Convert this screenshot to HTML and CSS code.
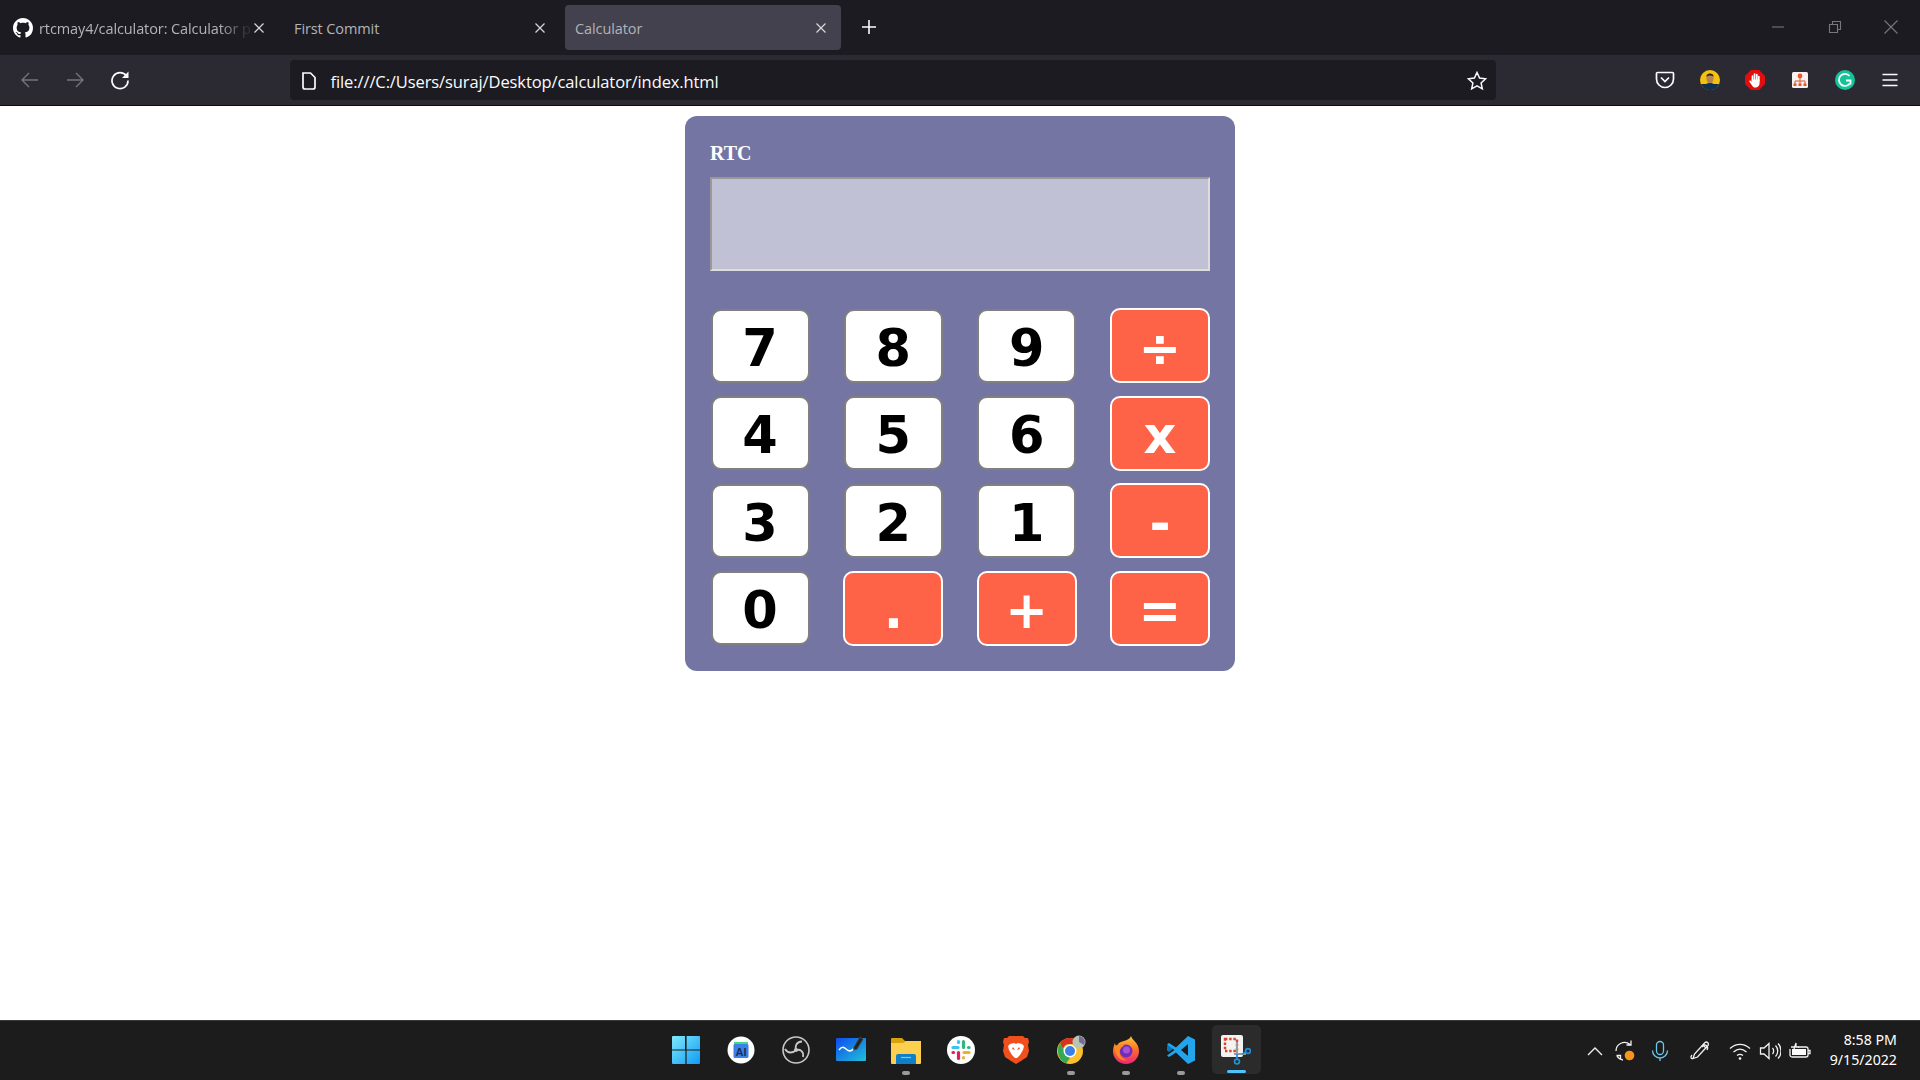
FILE: index.html
```html
<!DOCTYPE html>
<html lang="en">
<head>
<meta charset="utf-8">
<title>Calculator</title>
<link rel="stylesheet" href="styles.css">
</head>
<body>
<header class="chrome">
  <div class="tabbar">
    <div class="tabs">
      <div class="tab">
        <svg class="favicon" viewBox="0 0 16 16"><path fill="#fff" d="M8 0C3.58 0 0 3.58 0 8c0 3.54 2.29 6.53 5.47 7.59.4.07.55-.17.55-.38 0-.19-.01-.82-.01-1.49-2.01.37-2.53-.49-2.69-.94-.09-.23-.48-.94-.82-1.13-.28-.15-.68-.52-.01-.53.63-.01 1.08.58 1.23.82.72 1.21 1.87.87 2.33.66.07-.52.28-.87.51-1.07-1.78-.2-3.64-.89-3.64-3.95 0-.87.31-1.59.82-2.15-.08-.2-.36-1.02.08-2.12 0 0 .67-.21 2.2.82.64-.18 1.32-.27 2-.27.68 0 1.36.09 2 .27 1.53-1.04 2.2-.82 2.2-.82.44 1.1.16 1.92.08 2.12.51.56.82 1.27.82 2.15 0 3.07-1.87 3.75-3.65 3.95.29.25.54.73.54 1.48 0 1.07-.01 1.93-.01 2.2 0 .21.15.46.55.38A8.013 8.013 0 0016 8c0-4.42-3.58-8-8-8z"/></svg>
        <span class="tab-label tab-label-fade">rtcmay4/calculator: Calculator p</span>
        <svg class="tab-close" viewBox="0 0 12 12"><path d="M1.5 1.5l9 9M10.5 1.5l-9 9"/></svg>
      </div>
      <div class="tab">
        <span class="tab-label">First Commit</span>
        <svg class="tab-close" viewBox="0 0 12 12"><path d="M1.5 1.5l9 9M10.5 1.5l-9 9"/></svg>
      </div>
      <div class="tab tab-active">
        <span class="tab-label">Calculator</span>
        <svg class="tab-close" viewBox="0 0 12 12"><path d="M1.5 1.5l9 9M10.5 1.5l-9 9"/></svg>
      </div>
      <svg class="new-tab" viewBox="0 0 16 16"><path d="M8 1v14M1 8h14"/></svg>
    </div>
    <div class="window-controls">
      <svg class="win-icon" viewBox="0 0 14 14"><path d="M1 7h12"/></svg>
      <svg class="win-icon" viewBox="0 0 14 14"><path d="M1.5 4.5h8v8h-8zM4.5 4.5v-3h8v8h-3"/></svg>
      <svg class="win-icon" viewBox="0 0 14 14"><path d="M.5.5l13 13M13.500.5l-13 13"/></svg>
    </div>
  </div>
  <div class="toolbar">
    <div class="nav">
      <span class="tool"><svg class="ico ico-dim" viewBox="0 0 20 20"><path d="M18 10H2M9 3l-7 7 7 7"/></svg></span>
      <span class="tool"><svg class="ico ico-dim" viewBox="0 0 20 20"><path d="M2 10h16M11 3l7 7-7 7"/></svg></span>
      <span class="tool"><svg class="ico" viewBox="0 0 20 20"><path d="M16.500 6A8 8 0 1 0 18 10.500"/><path class="solid" d="M18.500 1.500v6.500h-6.500z"/></svg></span>
    </div>
    <div class="urlbar">
      <svg class="file-ico" viewBox="0 0 16 18"><path d="M2 1h7.500L14 5.500V15a2 2 0 0 1-2 2H4a2 2 0 0 1-2-2z"/></svg>
      <span class="url">file:///C:/Users/suraj/Desktop/calculator/index.html</span>
      <svg class="star" viewBox="0 0 20 20"><path d="M10 1.500l2.600 5.600 6 .7-4.500 4.100 1.200 6L10 14.900l-5.300 3 1.200-6L1.400 7.800l6-.7z"/></svg>
    </div>
    <div class="extensions">
      <span class="tool"><svg class="ico" viewBox="0 0 20 20"><path d="M2.500 2.500h15a1 1 0 0 1 1 1V9a8.500 8.500 0 0 1-17 0V3.500a1 1 0 0 1 1-1z"/><path d="M6 7.500l4 4 4-4"/></svg></span>
      <span class="tool"><svg class="ext" viewBox="0 0 20 20"><defs><clipPath id="av"><circle cx="10" cy="10" r="10"/></clipPath></defs><g clip-path="url(#av)"><rect width="20" height="20" fill="#f4c20d"/><path fill="#10304f" d="M0 14h20v6H0z"/><path fill="#10304f" d="M3 20c0-5 3-7 7-7s7 2 7 7z"/><ellipse cx="10" cy="8.500" rx="3.600" ry="4.800" fill="#b5835a"/><path fill="#2a1d14" d="M6.300 7c-.4-4 7-5 7.400 0-1-2-6.400-2-7.400 0z"/></g></svg></span>
      <span class="tool"><svg class="ext" viewBox="0 0 20 20"><path fill="#e30d0d" d="M6 0h8l6 6v8l-6 6H6l-6-6V6z"/><g fill="none" stroke="#fff" stroke-width="1.700" stroke-linecap="round"><path d="M7.500 11V6M9.600 10V4.200M11.800 10V4.600M13.800 10.500V6.500"/></g><path fill="#fff" d="M6.700 9.500h7.900V13c0 2.800-1.800 4.500-4 4.500-2 0-3-1-3.900-2.600L4.400 11.800c-.5-.9.700-1.700 1.400-.9l.9 1z"/></svg></span>
      <span class="tool"><svg class="ext" viewBox="0 0 20 20"><rect x="2" y="2" width="16" height="16" rx="1.500" fill="#f5f2f0"/><path fill="none" stroke="#e8552e" d="M10 8v3M5 14v-3h10v3M10 11v3"/><circle cx="10" cy="6" r="2.400" fill="#e8552e"/><rect x="3.500" y="13.500" width="3" height="2.500" fill="#e8552e"/><rect x="8.500" y="13.500" width="3" height="2.500" fill="#e8552e"/><rect x="13.500" y="13.500" width="3" height="2.500" fill="#e8552e"/></svg></span>
      <span class="tool"><svg class="ext" viewBox="0 0 20 20"><circle cx="10" cy="10" r="10" fill="#15c39a"/><path fill="none" stroke="#fff" stroke-width="1.800" d="M14.800 13.500A6 6 0 1 1 14.500 6"/><path fill="none" stroke="#fff" stroke-width="1.800" d="M11 10.500h4.500v4"/></svg></span>
      <span class="tool"><svg class="ico ico-menu" viewBox="0 0 16 16"><path d="M.5 2.500h15M.5 8h15M.5 13.500h15"/></svg></span>
    </div>
  </div>
</header>

<main class="page">
  <section class="calculator">
    <h1 class="brand">RTC</h1>
    <input class="display" type="text" aria-label="Display">
    <div class="keys">
      <button class="key">7</button>
      <button class="key">8</button>
      <button class="key">9</button>
      <button class="key key-op">÷</button>
      <button class="key">4</button>
      <button class="key">5</button>
      <button class="key">6</button>
      <button class="key key-op">x</button>
      <button class="key">3</button>
      <button class="key">2</button>
      <button class="key">1</button>
      <button class="key key-op">-</button>
      <button class="key">0</button>
      <button class="key key-op">.</button>
      <button class="key key-op">+</button>
      <button class="key key-op">=</button>
    </div>
  </section>
</main>

<footer class="taskbar">
  <div class="task-spacer"></div>
  <div class="task-apps">
    <span class="app"><svg class="app-ico" viewBox="0 0 30 30"><defs><linearGradient id="win" x1="0" y1="0" x2="1" y2="1"><stop offset="0" stop-color="#7fe9fb"/><stop offset="1" stop-color="#0f9bf5"/></linearGradient></defs><path fill="url(#win)" d="M1 2a1 1 0 0 1 1-1h12v13.400H1zM15.600 1H28a1 1 0 0 1 1 1v12.400H15.600zM1 15.600h13.400V29H2a1 1 0 0 1-1-1zM15.600 15.600H29V28a1 1 0 0 1-1 1H15.600z"/></svg></span>
    <span class="app"><svg class="app-ico" viewBox="0 0 30 30"><circle cx="15" cy="15" r="13.500" fill="#fff"/><path fill="#3ddc84" d="M8 7h14v4H8z"/><rect x="7.500" y="9" width="15" height="14" rx="1.500" fill="#3f7fe8"/><text class="ai-text" x="15" y="21">AI</text></svg></span>
    <span class="app"><svg class="app-ico" viewBox="0 0 30 30"><circle cx="15" cy="15" r="13" fill="#1e1e1e" stroke="#c8c8c8" stroke-width="1.600"/><path fill="none" stroke="#c8c8c8" stroke-width="1.800" d="M15 15c-1-4 0-8 6-8.500M15 15c4-1 8 1 7 7M15 15c-3 3-8 4-11-1"/><circle cx="15" cy="15" r="2" fill="#c8c8c8"/></svg></span>
    <span class="app"><svg class="app-ico" viewBox="0 0 30 30"><defs><linearGradient id="wb" x1="0" y1="0" x2="1" y2="1"><stop offset="0" stop-color="#0d4cf0"/><stop offset="1" stop-color="#20c2d8"/></linearGradient></defs><rect x="0" y="3" width="30" height="23" rx="1" fill="url(#wb)"/><path fill="none" stroke="#fff" stroke-width="1.600" d="M3 15c3-4 5-3 7-1s5 3 7 0"/><path fill="#222" stroke="#444" stroke-width="1" d="M18 12l6-10 3 2-6 10-3 1z"/></svg></span>
    <span class="app app-running"><svg class="app-ico" viewBox="0 0 30 30"><path fill="#d9a20b" d="M0 4a1 1 0 0 1 1-1h10l3 3h16v5H0z"/><path fill="#fdcf4e" d="M0 8h12l3-2h15v22a1 1 0 0 1-1 1H1a1 1 0 0 1-1-1z"/><path fill="#0f7fc9" d="M5 21a2 2 0 0 1 2-2h16a2 2 0 0 1 2 2v8H5z"/><path stroke="#7fc8f0" stroke-width="1.200" d="M10 22.500h10"/></svg></span>
    <span class="app"><svg class="app-ico" viewBox="0 0 30 30"><circle cx="15" cy="15" r="14" fill="#fff"/><g stroke-width="3.200" stroke-linecap="round" fill="none"><path stroke="#36c5f0" d="M7 12.500h5"/><path stroke="#36c5f0" d="M12.500 6.500v1"/><path stroke="#2eb67d" d="M17.500 6.500v6"/><path stroke="#2eb67d" d="M23 12.500h-.5"/><path stroke="#ecb22e" d="M18 17.500h5"/><path stroke="#ecb22e" d="M17.500 23v-.5"/><path stroke="#e01e5a" d="M12.500 17.500v6"/><path stroke="#e01e5a" d="M7 17.500h.5"/></g></svg></span>
    <span class="app"><svg class="app-ico" viewBox="0 0 30 30"><path fill="#f1501e" d="M8 1h14l2 2 3 0 1 4-1 3 1 6-2 6-6 4-5 3-5-3-6-4-2-6 1-6-1-3 1-4 3 0z"/><path fill="#fff" d="M9 9l4-1 2 1 2-1 4 1 2 2-1 4-3 5-3 3h-2l-3-3-3-5-1-4zM12 12l-1 2 3 1zM18 12l-2 3 3-1z"/></svg></span>
    <span class="app app-running"><svg class="app-ico" viewBox="0 0 30 30"><circle cx="14" cy="16" r="13" fill="#fbc02d"/><path fill="#d93025" d="M14 3a13 13 0 0 1 11 6H14a7 7 0 0 0-7 5L4 8a13 13 0 0 1 10-5z"/><path fill="#34a853" d="M2 16a13 13 0 0 1 2-8l6 11 4 4-4 5.500A13 13 0 0 1 2 16z"/><circle cx="14" cy="16" r="6.500" fill="#fff"/><circle cx="14" cy="16" r="5" fill="#3b7fe8"/><circle cx="23" cy="7" r="6.500" fill="#b8c4b4"/><path fill="#7a6a9a" d="M23 1a6 6 0 0 1 5 9l-5-3z"/></svg></span>
    <span class="app app-running"><svg class="app-ico" viewBox="0 0 30 30"><defs><linearGradient id="ff" x1="0" y1="0" x2="0" y2="1"><stop offset="0" stop-color="#ffcb2e"/><stop offset=".5" stop-color="#ff6a2b"/><stop offset="1" stop-color="#f0247a"/></linearGradient></defs><path fill="url(#ff)" d="M20 1c1 4 8 7 8 15a13 13 0 0 1-26 0c0-3 1-6 2-8 0 2 1 3 2 3 1-3 3-4 7-5 3-1 6-2 7-5z"/><circle cx="15" cy="16" r="6.500" fill="#6b2fb8"/><circle cx="15.500" cy="15" r="3.500" fill="#a950d8"/><path fill="#ff8a1f" d="M3 12c4-3 8-3 10-1-3 1-5 4-4 8 1 4 4 6 8 6-6 2-12-2-14-13z"/></svg></span>
    <span class="app app-running"><svg class="app-ico" viewBox="0 0 30 30"><path fill="#0a76bd" d="M1 11l2-1.500 5 3.500-5 4 -2-1.500zM8 15l14-13v7l-9 6 9 6v7z"/><path fill="#22a5ec" d="M22 1l7 3.500v21L22 29l-12-11.500L3 22l-2-1.500L8.500 15 1 9.500 3 8l7 4.500zM22 9l-7 6 7 6z"/></svg></span>
    <span class="app app-active"><svg class="app-ico" viewBox="0 0 30 30"><rect x="0" y="0" width="22" height="22" rx="2" fill="#f3f3f3"/><path fill="none" stroke="#d8432a" stroke-width="2.400" stroke-dasharray="2.400 1.800" d="M4 4h12v12H4z"/><path fill="none" stroke="#9a9a9a" stroke-width="2" d="M16 7v12M13 19h12"/><path fill="none" stroke="#1e8fd8" stroke-width="1.800" d="M16 19v5M21 19l4-2"/><circle cx="16" cy="26.500" r="2.400" fill="none" stroke="#1e8fd8" stroke-width="1.800"/><circle cx="27" cy="16" r="2.400" fill="none" stroke="#1e8fd8" stroke-width="1.800"/></svg></span>
  </div>
  <div class="tray">
    <svg class="tray-ico tray-chevron" viewBox="0 0 18 18"><path d="M2 13l7-7 7 7"/></svg>
    <svg class="tray-ico tray-sync" viewBox="0 0 22 22"><path d="M2 11a8.500 8.500 0 0 1 14-6.500M17 .5v4.500h-4.500M2.500 15.500h4v4M3 16a8 8 0 0 0 6 4"/><circle class="sync-dot" cx="15.500" cy="15.500" r="4.800"/></svg>
    <svg class="tray-ico tray-mic" viewBox="0 0 22 22"><rect x="7.500" y="1.500" width="7" height="13" rx="3.500"/><path d="M3.500 10.500a7.500 7.500 0 0 0 15 0M11 18v3"/></svg>
    <svg class="tray-ico tray-pen" viewBox="0 0 22 22"><path d="M16 2.500c2-1.500 4.500 1 3 3L8.500 17l-4.500 1.500L5.500 14zM14 5l3 3M5 18c-3 2-4-1-2-3M13 7c3-4 7-1 5 3"/></svg>
    <svg class="tray-ico tray-wifi" viewBox="0 0 22 22"><path d="M1 8.500c6-5.500 14-5.500 20 0M4.500 12c4-3.500 9-3.500 13 0M8 15.500c2-1.500 4-1.500 6 0"/><circle class="solid" cx="11" cy="18.500" r="1.300"/></svg>
    <svg class="tray-ico tray-vol" viewBox="0 0 22 22"><path d="M1.500 8h3.500l5-4.500v15L5 14H1.500zM13.500 8c1.500 1.500 1.500 4.500 0 6M16.500 5.500c3 3 3 8 0 11M19 3.500c4 4 4 11 0 15"/></svg>
    <svg class="tray-ico tray-bat" viewBox="0 0 22 22"><path d="M2 7h4M9 7h8a2 2 0 0 1 2 2v6a2 2 0 0 1-2 2H3a2 2 0 0 1-2-2V9M19.500 10.500h1.500v3h-1.500"/><path class="solid" d="M3 9h14v6H3z"/><path d="M5 9l2-6v4h3"/></svg>
    <div class="clock"><span>8:58 PM</span><span>9/15/2022</span></div>
  </div>
</footer>
</body>
</html>
```
FILE: styles.css
```css
* { box-sizing: border-box; }
html, body { height: 100%; }
body {
  margin: 0;
  height: 1080px;
  display: flex;
  flex-direction: column;
  background: #fff;
  overflow: hidden;
  font-family: "Open Sans", "Noto Sans", sans-serif;
}

/* browser chrome */
.chrome { flex: none; height: 106px; border-bottom: 1px solid #0c0c0d; }
.tabbar {
  height: 55px;
  background: #1c1b22;
  display: flex;
  justify-content: space-between;
  padding-left: 3px;
}
.tabs { display: flex; align-items: flex-start; gap: 5px; padding-top: 5px; }
.tab {
  width: 276px;
  height: 45px;
  display: flex;
  align-items: center;
  padding: 1px 14px 0 10px;
  border-radius: 4px;
  color: #b3b3b8;
  font-size: 14.500px;
  letter-spacing: -.1px;
}
.tab-active { background: #42414d; }
.favicon { width: 20px; height: 20px; flex: none; margin-right: 6px; }
.tab-label { flex: 1; min-width: 0; white-space: nowrap; overflow: hidden; }
.tab-label-fade {
  -webkit-mask-image: linear-gradient(90deg, #000 84%, rgba(0, 0, 0, .15) 97%);
  mask-image: linear-gradient(90deg, #000 84%, rgba(0, 0, 0, .15) 97%);
}
.tab-close { width: 12px; height: 12px; flex: none; fill: none; stroke: #d8d8dc; stroke-width: 1.200; }
.new-tab { width: 16px; height: 16px; margin: 14px 0 0 15px; fill: none; stroke: #fbfbfe; stroke-width: 1.600; }
.window-controls { display: flex; align-items: center; gap: 42.500px; padding: 0 22px 1px 0; }
.win-icon { width: 14px; height: 14px; fill: none; stroke: #77767c; stroke-width: 1.100; }
.toolbar {
  height: 50px;
  background: #2b2a33;
  display: flex;
  align-items: center;
  padding: 0 7.500px;
}
.nav { display: flex; margin-right: 147px; }
.tool { width: 45px; height: 40px; display: flex; align-items: center; justify-content: center; }
.ico { width: 20px; height: 20px; fill: none; stroke: #fbfbfe; stroke-width: 1.700; }
.ico-dim { stroke: #75747b; stroke-width: 1.400; }
.ico-menu { width: 16px; height: 16px; }
.solid { fill: #fbfbfe; stroke: none; }
.urlbar {
  width: 1206.500px;
  height: 40px;
  background: #1c1b22;
  border-radius: 4px;
  display: flex;
  align-items: center;
  padding: 1px 9px 0 11px;
  color: #fbfbfe;
  font-size: 16.500px;
  letter-spacing: -.1px;
}
.file-ico { width: 16px; height: 18px; fill: none; stroke: #fbfbfe; stroke-width: 1.700; margin-right: 14px; }
.url { flex: 1; padding-top: 2px; }
.star { width: 20px; height: 20px; fill: none; stroke: #fbfbfe; stroke-width: 1.500; }
.extensions { display: flex; margin-left: auto; }
.ext { width: 20px; height: 20px; }

/* calculator page */
.page { flex: 1; display: flex; justify-content: center; align-items: flex-start; padding: 10px 0 0 0; }
.calculator {
  width: 550px;
  height: 555px;
  padding: 25px;
  background: #7575a3;
  border-radius: 12px;
  font-family: "Liberation Serif", serif;
}
.brand {
  margin: 0;
  height: 36px;
  color: #fff;
  font-size: 20px;
  font-weight: 700;
  line-height: 24px;
}
.display {
  display: block;
  width: 500px;
  height: 94px;
  margin: 0 0 37px;
  padding: 0;
  background: #c1c1d6;
  border-width: 2px;
  border-style: solid;
  border-color: #999 #ddd #ddd #999;
  outline: none;
}
.keys {
  display: grid;
  grid-template-columns: repeat(4, 100px);
  grid-auto-rows: 75px;
  justify-content: space-between;
  row-gap: 12.670px;
}
.key {
  width: 99px;
  height: 74px;
  place-self: center;
  padding: 5px 0 0;
  background: #fff;
  border: 2px solid #808080;
  border-radius: 10px;
  color: #000;
  font-family: "DejaVu Sans", sans-serif;
  font-size: 51px;
  font-weight: 700;
  line-height: 1;
}
.key-op {
  width: 100px;
  height: 75px;
  background: #ff6347;
  border-color: #fff;
  color: #fff;
}

/* taskbar */
.taskbar {
  flex: none;
  height: 60px;
  background: #1c1c1c;
  border-top: 1px solid #3a3a3a;
  display: grid;
  grid-template-columns: 1fr auto 1fr;
  align-items: center;
}
.task-apps { display: flex; gap: 6px; height: 49px; padding-left: 2px; box-sizing: content-box; margin-bottom: 2px; }
.app {
  width: 49px;
  height: 49px;
  display: flex;
  align-items: center;
  justify-content: center;
  position: relative;
  border-radius: 5px;
}
.app-ico { width: 30px; height: 30px; }
.app-running::after {
  content: "";
  position: absolute;
  left: 20px;
  bottom: -1px;
  width: 8px;
  height: 4px;
  border-radius: 2px;
  background: #9a9a9a;
}
.app-active { background: #2b2b2b; }
.app-active::after {
  content: "";
  position: absolute;
  left: 15px;
  bottom: 1px;
  width: 19px;
  height: 3px;
  border-radius: 2px;
  background: #4cc2ff;
}
.ai-text { font-family: "Liberation Sans", sans-serif; font-size: 11px; font-weight: 700; fill: #10305a; text-anchor: middle; }
.tray { display: flex; align-items: center; justify-content: flex-end; padding-right: 23px; color: #fff; }
.tray-ico { width: 22px; height: 22px; fill: none; stroke: #f2f2f2; stroke-width: 1.300; display: block; }
.tray-chevron { width: 18px; height: 18px; }
.tray-sync { margin-left: 10px; }
.sync-dot { fill: #f7941d; stroke: none; }
.tray-mic { margin-left: 13px; stroke: #6cc7e8; }
.tray-pen { margin-left: 18px; }
.tray-wifi { margin-left: 18px; }
.tray-vol { margin-left: 8px; }
.tray-bat { margin-left: 8px; }
.clock {
  display: flex;
  flex-direction: column;
  align-items: flex-end;
  margin: 0 0 2px 19.500px;
  font-family: "Noto Sans", sans-serif;
  font-size: 14.200px;
  line-height: 19.500px;
  width: 67px;
}
.clock span { white-space: nowrap; }
```
